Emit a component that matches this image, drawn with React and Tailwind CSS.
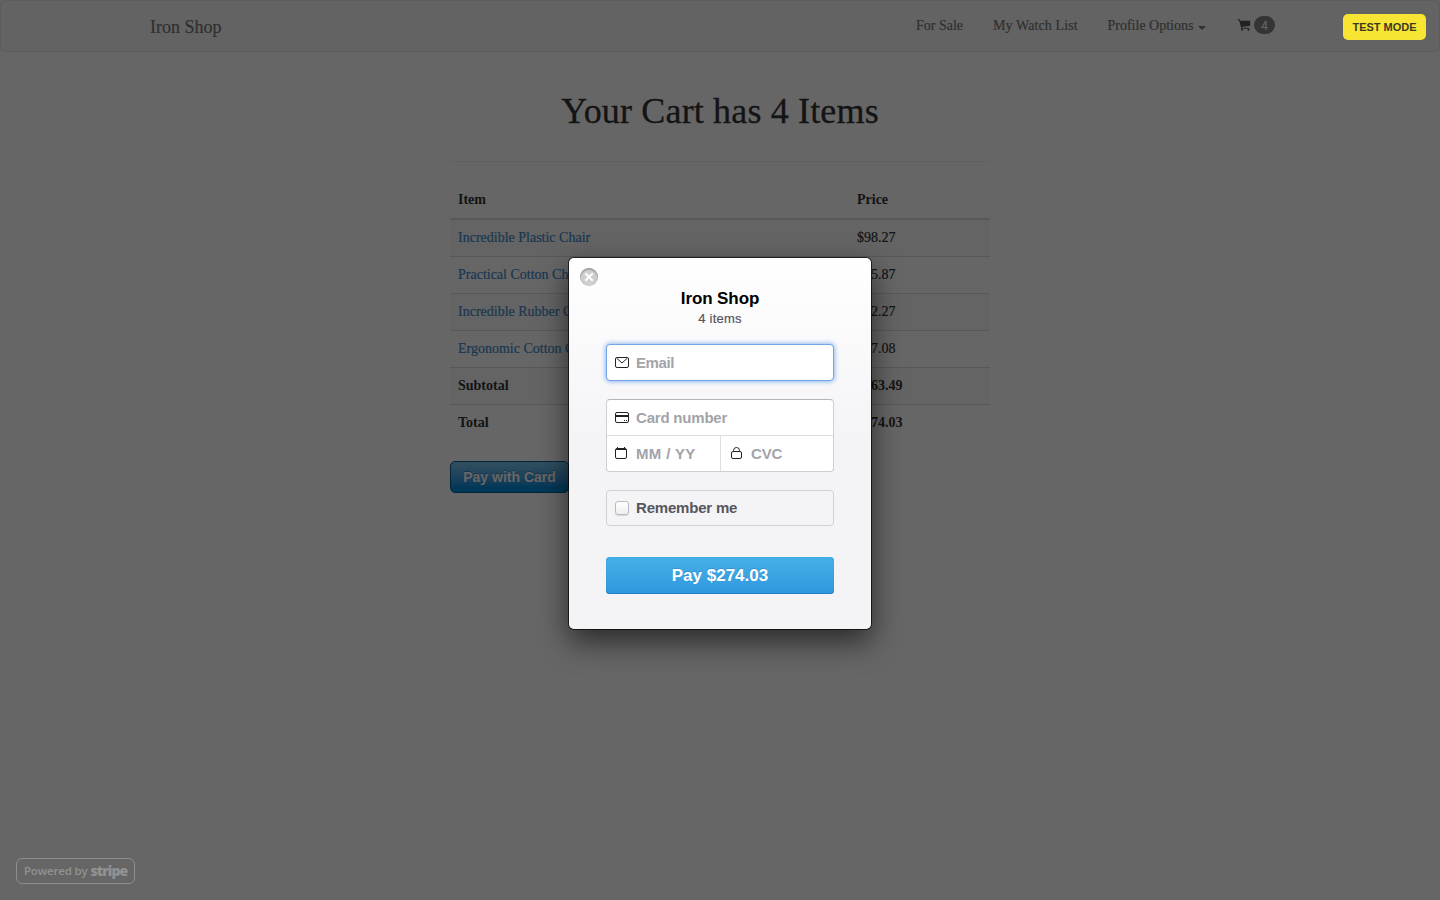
import React from "react";

const rows = [
  { name: "Incredible Plastic Chair", price: "$98.27" },
  { name: "Practical Cotton Chair", price: "$35.87" },
  { name: "Incredible Rubber Chair", price: "$72.27" },
  { name: "Ergonomic Cotton Chair", price: "$57.08" },
  { name: "Subtotal", price: "$263.49", summary: true },
  { name: "Total", price: "$274.03", summary: true },
];

function CartIcon() {
  return (
    <svg width="14" height="14" viewBox="0 0 14 14" fill="#555" className="shrink-0">
      <path d="M.6 1.2h2.2l.7 1.6h9.7v5L4.9 8.9l.3.9h7.1v1H4.3L2.1 2.3H.6z" />
      <rect x="4" y="11" width="2" height="1.8" rx=".8" />
      <rect x="10.5" y="11" width="2" height="1.8" rx=".8" />
    </svg>
  );
}

function Navbar() {
  return (
    <nav className="flex h-[52px] items-start rounded border border-[#e7e7e7] bg-[#f8f8f8] pl-[149px] text-[14px] leading-5 text-[#777] [-webkit-text-stroke:0.2px]">
      <span className="w-[766px] pt-4 text-[18px]">Iron Shop</span>
      <span className="w-[77px] pt-[15px]">For Sale</span>
      <span className="w-[114.5px] pt-[15px] tracking-[0.1px]">My Watch List</span>
      <span className="flex w-[129.5px] items-center gap-[5px] pt-[15px]">
        Profile Options
        <span className="mt-[3px] border-x-4 border-t-4 border-x-transparent border-t-[#777]" />
      </span>
      <span className="flex items-center gap-[3px] pt-[15px]">
        <CartIcon />
        <span className="flex h-[18px] w-[21px] items-center justify-center rounded-full bg-[#777] pt-px font-['Liberation_Sans',sans-serif] text-[12px] text-[#f8f8f8] opacity-90">4</span>
      </span>
    </nav>
  );
}

function Cart() {
  return (
    <main className="mx-auto w-[540px] text-[14px] leading-5 text-[#333]">
      <h1 className="mt-[39px] text-center text-[36px] leading-[40px] tracking-[0.16px] [-webkit-text-stroke:0.3px]">Your Cart has 4 Items</h1>
      <hr className="mt-[30px] border-t border-[#eee]" />
      <div className="mt-5 flex h-[38px] border-b-2 border-[#ddd] p-2 font-bold">
        <span className="w-[399px]">Item</span>
        <span>Price</span>
      </div>
      {rows.map((row, i) => (
        <div
          key={row.name}
          className={
            "flex px-2 pt-2 " +
            (i === 0 ? "h-9 " : "h-[37px] border-t border-[#ddd] ") +
            (i % 2 === 0 ? "bg-[#f9f9f9] " : "") +
            (row.summary ? "font-bold" : "[-webkit-text-stroke:0.2px]")
          }
        >
          <span className={row.summary ? "w-[399px]" : "w-[399px] text-[#428bca]"}>{row.name}</span>
          <span>{row.price}</span>
        </div>
      ))}
      <button className="mt-5 h-8 w-[119px] rounded-[5px] border border-[#015e94] bg-linear-to-b from-[#7dc5ee] via-[#008cdd] via-85% to-[#008cdd] font-['Liberation_Sans',sans-serif] text-[14px] font-bold text-white [text-shadow:0_-1px_0_rgba(0,0,0,.25)]">
        Pay with Card
      </button>
    </main>
  );
}

function MailIcon() {
  return (
    <svg width="14" height="11" viewBox="0 0 14 11" fill="none" stroke="#222">
      <rect x=".5" y=".5" width="13" height="10" rx="1.5" />
      <path d="M2 1.5 7 6l5-4.5" />
    </svg>
  );
}

function CardIcon() {
  return (
    <svg width="14" height="11" viewBox="0 0 14 11" fill="none" stroke="#222">
      <rect x=".5" y=".5" width="13" height="10" rx="1.5" />
      <path d="M1 4h12" strokeWidth="2" />
      <path d="M9 8.5h1M11 8.5h1" />
    </svg>
  );
}

function CalendarIcon() {
  return (
    <svg width="12" height="12" viewBox="0 0 12 12" fill="none" stroke="#222">
      <rect x=".5" y="1.5" width="11" height="10" rx="1.5" />
      <path d="M1 2.5h10M2.5 0v2M9.5 0v2" />
    </svg>
  );
}

function LockIcon() {
  return (
    <svg width="11" height="12" viewBox="0 0 11 12" fill="none" stroke="#222">
      <rect x=".5" y="4.5" width="10" height="7" rx="1.5" />
      <path d="M2.5 4.5v-1a3 3 0 0 1 6 0v1" />
    </svg>
  );
}

function Field({ icon, label, className = "", labelClass = "" }) {
  return (
    <div className={"flex items-center pl-2 text-[#a3a3aa] " + className}>
      <span className="flex w-[21px] items-center">{icon}</span>
      <span className={"pt-[2px] " + labelClass}>{label}</span>
    </div>
  );
}

function CheckoutModal() {
  return (
    <section className="relative mt-[258px] flex h-[371px] w-[302px] flex-col rounded-[5px] bg-linear-to-b from-white to-[#f4f4f7] to-50% px-[37px] font-['Liberation_Sans',sans-serif] shadow-[0_0_0_1px_rgba(0,0,0,.65),0_12px_30px_rgba(0,0,0,.6)]">
      <button className="absolute top-[10px] left-[11px] size-[18px] rounded-full bg-[#cfcfcf] shadow-[inset_0_1px_2px_rgba(0,0,0,.4)]" aria-label="Close">
        <svg width="18" height="18" viewBox="0 0 18 18" fill="none" stroke="#fff" strokeWidth="2">
          <path d="m5.3 5.3 7.4 7.4M12.7 5.3l-7.4 7.4" />
        </svg>
      </button>
      <h2 className="mt-[31px] text-center text-[17px] leading-5 font-bold tracking-[-0.1px] text-black">Iron Shop</h2>
      <p className="mt-px text-center text-[13px] leading-[18px] tracking-[0.2px] text-[#56565d] [-webkit-text-stroke:0.2px]">4 items</p>
      <div className="mt-4 flex flex-col text-[15px] font-bold tracking-[-0.2px]">
        <Field
          icon={<MailIcon />}
          label="Email"
          className="h-[37px] rounded border border-[#72a5e4] bg-white shadow-[0_0_4px_1px_rgba(80,145,230,.6)]"
          labelClass="tracking-[-0.4px]"
        />
        <div className="mt-[18px] h-[73px] rounded border border-[#cfcfd2] border-t-[#b5b5b8] bg-white">
          <Field icon={<CardIcon />} label="Card number" className="h-[35px]" />
          <div className="flex h-9 border-t border-[#dfdfe2]">
            <Field icon={<span className="-mt-px"><CalendarIcon /></span>} label="MM / YY" className="w-[114px] border-r border-[#dfdfe2]" labelClass="tracking-[0.35px]" />
            <div className="flex items-center pl-[10px] text-[#a3a3aa]">
              <span className="-mt-px flex w-5 items-center"><LockIcon /></span>
              <span className="pt-[2px]">CVC</span>
            </div>
          </div>
        </div>
        <label className="mt-[18px] flex h-9 items-center gap-[7px] rounded border border-[#d2d2d5] pl-2 text-[#56565d]">
          <span className="size-[14px] rounded-[3px] border border-[#bcbcbf] bg-linear-to-b from-white to-[#eeeeef] shadow-[0_1px_1px_rgba(0,0,0,.12)]" />
          Remember me
        </label>
      </div>
      <button className="mt-[31px] h-[37px] shrink-0 rounded bg-linear-to-b from-[#45b1e8] to-[#3097de] text-[17px] font-bold text-white shadow-[inset_0_-1px_0_#267fc2,inset_0_0_1px_#267fc2] [text-shadow:0_-1px_0_rgba(46,86,153,.3)]">
        Pay $274.03
      </button>
    </section>
  );
}

export default function App() {
  return (
    <div className="relative h-[900px] w-[1440px] overflow-hidden bg-white font-['Liberation_Serif',serif]">
      <Navbar />
      <Cart />
      <div className="absolute inset-0 flex items-start justify-center bg-black/60">
        <CheckoutModal />
        <span className="absolute top-[14px] right-[14px] flex h-[26px] w-[83px] items-center justify-center rounded-[5px] bg-[#f8e533] font-['Liberation_Sans',sans-serif] text-[11px] font-bold text-[#3b3a22]">
          TEST MODE
        </span>
        <span className="absolute bottom-4 left-4 flex h-[26px] w-[119px] items-center justify-center gap-[3px] rounded-md border border-[#8e8e8e] font-['Open_Sans',sans-serif] text-[#929292]">
          <span className="text-[11.5px] font-semibold tracking-[-0.15px]">Powered by</span>
          <span className="pb-px text-[14px] font-extrabold tracking-[-1px]">stripe</span>
        </span>
      </div>
    </div>
  );
}
